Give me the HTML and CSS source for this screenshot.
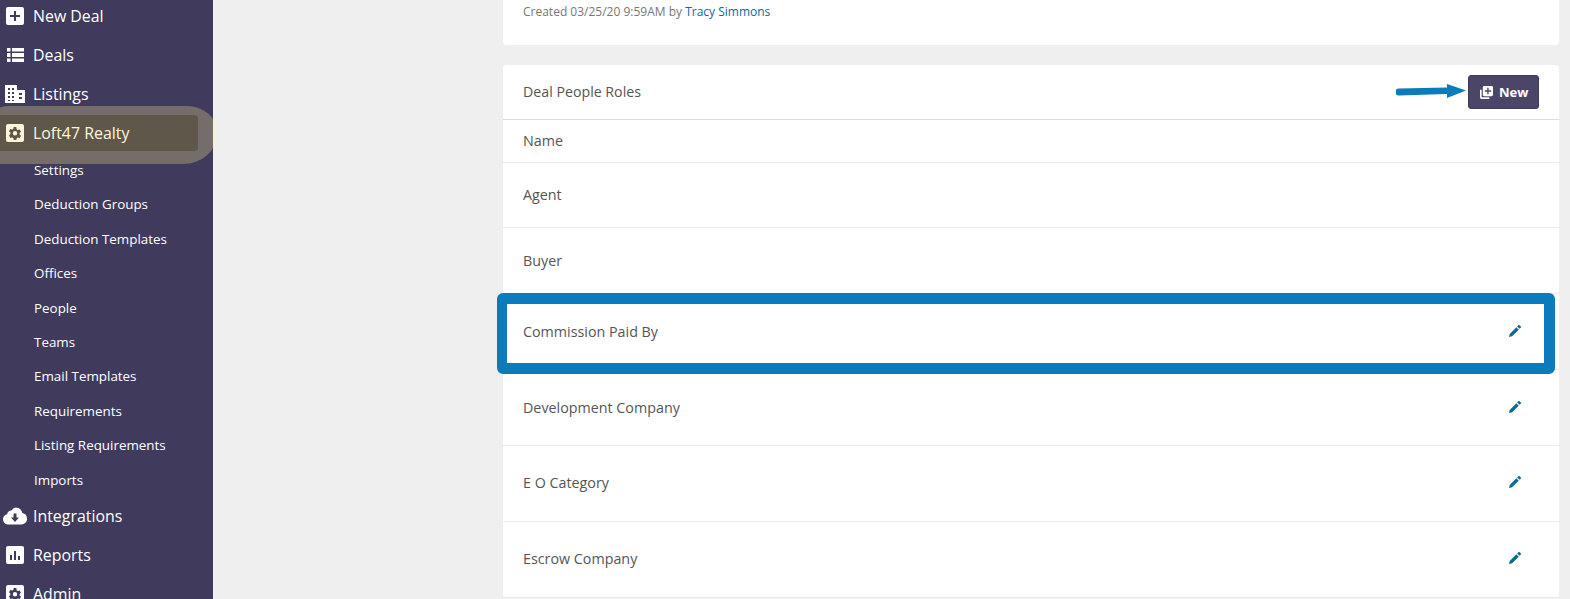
FILE: index.html
```html
<!DOCTYPE html>
<html lang="en">
<head>
<meta charset="utf-8">
<title>Deal People Roles</title>
<link rel="stylesheet" href="styles.css">
</head>
<body>
<div class="app">
  <aside class="sidebar">
    <a class="nav-item"><svg class="nav-icon" viewBox="0 0 18 18"><path fill="#fff" fill-rule="evenodd" d="M2 0h14a2 2 0 0 1 2 2v14a2 2 0 0 1-2 2H2a2 2 0 0 1-2-2V2a2 2 0 0 1 2-2zM8 4v4H4v2h4v4h2v-4h4V8h-4V4z"/></svg>New Deal</a>
    <a class="nav-item"><svg class="nav-icon" viewBox="0 0 18 18"><path fill="#fff" d="M1 2h3.500v3.500H1zM6 2h12v3.500H6zM1 7h3.500v4H1zM6 7h12v4H6zM1 12.500h3.500V16H1zM6 12.500h12V16H6z"/></svg>Deals</a>
    <a class="nav-item"><svg class="nav-icon nav-icon-listing" viewBox="0 0 20 18"><path fill="#fff" fill-rule="evenodd" d="M0 0h12v5h8v13H0zM3 3v2h2V3zM7 3v2h2V3zM3 7v2h2V7zM7 7v2h2V7zM3 11v2h2v-2zM7 11v2h2v-2zM3 15v1h2v-1zM7 15v1h2v-1zM14 8v2h3V8zM14 12v2h3v-2z"/></svg>Listings</a>
    <a class="nav-item nav-item-active"><svg class="nav-icon" viewBox="0 0 18 18"><path fill="#fdf6d8" fill-rule="evenodd" d="M2 0h14a2 2 0 0 1 2 2v14a2 2 0 0 1-2 2H2a2 2 0 0 1-2-2V2a2 2 0 0 1 2-2zM7.700 3l-.4 1.900-1.200.7-1.800-.6-1.300 2.300 1.400 1.300v1.400l-1.400 1.300L4.300 14l1.800-.6 1.200.7.400 1.900h2.600l.4-1.900 1.200-.7 1.800.6 1.300-2.200-1.400-1.300V9.100l1.400-1.300L13.700 5.500l-1.800.6-1.200-.7L10.300 3zM9 7a2.200 2.200 0 1 1 0 4.400A2.200 2.200 0 0 1 9 7z"/></svg>Loft47 Realty</a>
    <ul class="sub-list">
      <li class="sub-item">Settings</li>
      <li class="sub-item">Deduction Groups</li>
      <li class="sub-item">Deduction Templates</li>
      <li class="sub-item">Offices</li>
      <li class="sub-item">People</li>
      <li class="sub-item">Teams</li>
      <li class="sub-item">Email Templates</li>
      <li class="sub-item">Requirements</li>
      <li class="sub-item">Listing Requirements</li>
      <li class="sub-item">Imports</li>
    </ul>
    <a class="nav-item"><svg class="nav-icon nav-icon-wide" viewBox="0 0 24 17"><path fill="#fff" fill-rule="evenodd" d="M13 0a7 7 0 0 1 6.300 5.600A5.800 5.800 0 0 1 24 11.200 5.600 5.600 0 0 1 18.400 17H5.200A5.200 5.200 0 0 1 0 11.800 5.300 5.300 0 0 1 4.100 6.700 4 4 0 0 1 8.600 3.100 6 6 0 0 1 13 0zM10.500 6v4H8l4 4.500 4-4.500h-2.500V6z"/></svg>Integrations</a>
    <a class="nav-item"><svg class="nav-icon" viewBox="0 0 18 18"><path fill="#fff" fill-rule="evenodd" d="M2 0h14a2 2 0 0 1 2 2v14a2 2 0 0 1-2 2H2a2 2 0 0 1-2-2V2a2 2 0 0 1 2-2zM4 9v5h2V9zM8 5v9h2V5zM12 10v4h2v-4z"/></svg>Reports</a>
    <a class="nav-item"><svg class="nav-icon" viewBox="0 0 18 18"><path fill="#fff" fill-rule="evenodd" d="M2 0h14a2 2 0 0 1 2 2v14a2 2 0 0 1-2 2H2a2 2 0 0 1-2-2V2a2 2 0 0 1 2-2zM7.700 3l-.4 1.900-1.200.7-1.800-.6-1.300 2.300 1.400 1.300v1.400l-1.400 1.300L4.300 14l1.800-.6 1.200.7.400 1.900h2.600l.4-1.900 1.200-.7 1.800.6 1.300-2.200-1.400-1.300V9.100l1.400-1.300L13.700 5.500l-1.800.6-1.200-.7L10.300 3zM9 7a2.200 2.200 0 1 1 0 4.400A2.200 2.200 0 0 1 9 7z"/></svg>Admin</a>
  </aside>
  <main class="main">
    <section class="card card-meta">
      <p class="meta">Created 03/25/20 9:59AM by <a class="meta-link">Tracy Simmons</a></p>
    </section>
    <section class="card card-table">
      <header class="card-head">
        <h2 class="card-title">Deal People Roles</h2>
        <button class="btn-new"><svg class="btn-icon" viewBox="0 0 14 14"><path fill="#fff" fill-rule="evenodd" d="M4.500 0h8A1.500 1.500 0 0 1 14 1.500v8a1.500 1.500 0 0 1-1.500 1.500h-8A1.500 1.500 0 0 1 3 9.500v-8A1.500 1.500 0 0 1 4.500 0zM7.800 2v2.600H5.200v1.700h2.600V9h1.500V6.300H12V4.600H9.300V2zM0 4h1.800v8.200H10V14H1.500A1.500 1.500 0 0 1 0 12.500z"/></svg>New</button>
      </header>
      <div class="row row-head">Name</div>
      <div class="row row-agent">Agent</div>
      <div class="row row-buyer">Buyer</div>
      <div class="row row-commission">Commission Paid By<svg class="edit" viewBox="0 0 14 14"><path fill="#0b6a9c" d="M0 14l.8-3.600L8.600 2.600l2.800 2.800-7.800 7.800zM9.500 1.700L10.800.4a1.200 1.200 0 0 1 1.700 0l1.100 1.100a1.200 1.200 0 0 1 0 1.700l-1.300 1.300z"/></svg></div>
      <div class="row">Development Company<svg class="edit" viewBox="0 0 14 14"><path fill="#0b6a9c" d="M0 14l.8-3.600L8.600 2.600l2.800 2.800-7.800 7.800zM9.500 1.700L10.800.4a1.200 1.200 0 0 1 1.700 0l1.100 1.100a1.200 1.200 0 0 1 0 1.700l-1.300 1.300z"/></svg></div>
      <div class="row row-up">E O Category<svg class="edit" viewBox="0 0 14 14"><path fill="#0b6a9c" d="M0 14l.8-3.600L8.600 2.600l2.800 2.800-7.800 7.800zM9.500 1.700L10.800.4a1.200 1.200 0 0 1 1.700 0l1.100 1.100a1.200 1.200 0 0 1 0 1.700l-1.300 1.300z"/></svg></div>
      <div class="row row-up">Escrow Company<svg class="edit" viewBox="0 0 14 14"><path fill="#0b6a9c" d="M0 14l.8-3.600L8.600 2.600l2.800 2.800-7.800 7.800zM9.500 1.700L10.800.4a1.200 1.200 0 0 1 1.700 0l1.100 1.100a1.200 1.200 0 0 1 0 1.700l-1.300 1.300z"/></svg></div>
    </section>
  </main>
  <div class="mark-loft"></div>
  <div class="mark-box"></div>
  <svg class="mark-arrow" viewBox="0 0 70 15"><path fill="#0b7bbb" d="M3 4.500l48-1V0l19 6.500L51 14v-4l-48 1.500a3.500 3.500 0 0 1 0-7z"/></svg>
</div>
</body>
</html>
```
FILE: styles.css
```css
* { box-sizing: border-box; }
html, body { margin: 0; height: 599px; overflow: hidden; }
body { font-family: "Open Sans", "Noto Sans", "Liberation Sans", sans-serif; background: #efefef; color: #555; }
.app { position: relative; display: flex; width: 1570px; height: 599px; overflow: hidden; }
.sidebar { width: 213px; flex: none; background: #403a5c; color: #fff; margin-top: -4px; height: 640px; }
.nav-item { display: flex; align-items: center; height: 39px; padding-left: 6px; font-size: 15.900px; font-weight: 500; }
.nav-icon { width: 18px; height: 18px; margin-right: 9px; flex: none; }
.nav-icon-listing { width: 20px; margin-left: -1px; margin-right: 8px; }
.nav-icon-wide { width: 24px; margin-left: -3px; margin-right: 6px; }
.nav-item-active { position: relative; z-index: 1; color: #fdf6d8; }
.sub-list { list-style: none; margin: 0; padding: 1px 0 0 34px; }
.sub-item { height: 34.400px; line-height: 34.400px; font-size: 13.400px; font-weight: 500; }
.main { flex: 1; padding: 0 11px 0 290px; }
.card { background: #fff; border-radius: 4px; }
.card-meta { height: 45px; padding-left: 20px; margin-bottom: 20px; border-radius: 0 0 4px 4px; }
.meta { margin: 0; padding-top: 3px; font-size: 12px; line-height: 17px; color: #777; }
.meta-link { color: #0b6a9c; }
.card-head { display: flex; align-items: center; justify-content: space-between; height: 55px; padding: 0 20px 0 20px; border-bottom: 1px solid #dcdcdc; }
.card-title { margin: 0 0 2px; font-size: 14.200px; font-weight: 400; color: #555; }
.btn-new { display: flex; align-items: center; height: 34px; width: 71px; padding: 0 0 0 11px; background: #4b4668; border: 1px solid #3f3a5a; border-radius: 3px; color: #fff; font: 700 13px "Open Sans", sans-serif; }
.btn-icon { width: 13px; height: 13px; margin-right: 6px; flex: none; }
.row { display: flex; align-items: center; justify-content: space-between; height: 76px; padding: 0 38px 0 20px; font-size: 14.300px; border-bottom: 1px solid #ececec; }
.row-head { height: 43px; padding-bottom: 2px; }
.row-agent { height: 65px; padding-bottom: 2px; }
.row-buyer { height: 66px; }
.row-commission .edit, .row .edit { margin-bottom: 2px; }
.row-up { padding-bottom: 2px; }
.edit { width: 12px; height: 12px; flex: none; }
.mark-loft { position: absolute; left: -20px; top: 106px; width: 237px; height: 58px; background: linear-gradient(90deg, #756d6a 233px, #f7f1d8 233px); border-radius: 30px 30px 34px 8px / 26px 26px 30px 8px; }
.mark-loft::after { content: ""; position: absolute; left: 0; right: 19px; top: 9px; bottom: 13px; background: #5f5749; border-radius: 4px; }
.mark-box { position: absolute; left: 497px; top: 293px; width: 1058px; height: 81px; border: 11px solid #0b7bbb; border-left-width: 10px; border-radius: 6px; }
.mark-arrow { position: absolute; left: 1396px; top: 84px; width: 70px; height: 15px; }
```
